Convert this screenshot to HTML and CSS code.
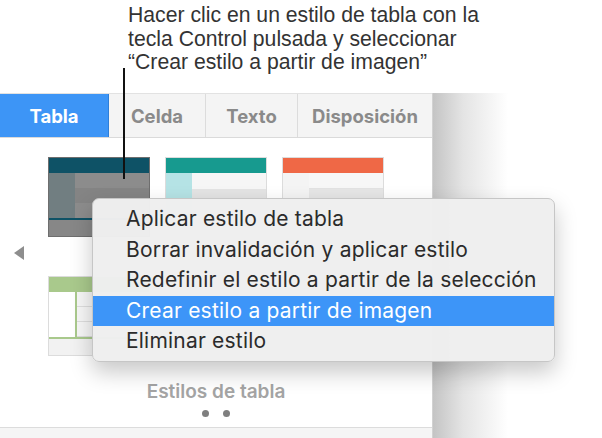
FILE: index.html
```html
<!DOCTYPE html>
<html lang="es">
<head>
    <meta charset="UTF-8">
    <title>Estilos de tabla</title>
    <link rel="stylesheet" href="styles.css">
</head>
<body>

    <div class="callout">
        <p>Hacer clic en un estilo de tabla con la<br>tecla Control pulsada y seleccionar<br>“Crear estilo a partir de imagen”</p>
    </div>

    <div class="main">
        <div class="panel">
            <div class="tabs">
                <div class="tab active">Tabla</div>
                <div class="tab">Celda</div>
                <div class="tab">Texto</div>
                <div class="tab last">Disposición</div>
            </div>

            <div class="styles">
                <div class="pager">
                    <div class="arrow"></div>
                    <div class="grid">
                        <div class="thumb dark">
                            <div class="head"></div>
                            <div class="body">
                                <div class="col"></div>
                                <div class="rows">
                                    <div class="r"></div><div class="r alt"></div><div class="r"></div>
                                </div>
                            </div>
                            <div class="foot"></div>
                        </div>
                        <div class="thumb teal">
                            <div class="head"></div>
                            <div class="body">
                                <div class="col"></div>
                                <div class="rows">
                                    <div class="r"></div><div class="r alt"></div><div class="r"></div>
                                </div>
                            </div>
                            <div class="foot"></div>
                        </div>
                        <div class="thumb orange">
                            <div class="head"></div>
                            <div class="body">
                                <div class="col"></div>
                                <div class="rows">
                                    <div class="r"></div><div class="r alt"></div><div class="r"></div>
                                </div>
                            </div>
                            <div class="foot"></div>
                        </div>
                        <div class="thumb green">
                            <div class="head"></div>
                            <div class="body">
                                <div class="col"></div>
                                <div class="rows">
                                    <div class="r"></div><div class="r"></div><div class="r"></div>
                                </div>
                            </div>
                            <div class="foot"></div>
                        </div>
                        <div class="thumb blank"></div>
                        <div class="thumb blank"></div>
                    </div>
                </div>

                <div class="label">Estilos de tabla</div>
                <div class="dots"><span></span><span></span></div>
            </div>

            <div class="bottom"></div>
        </div>
        <div class="shade"></div>
    </div>

    <!-- línea de la leyenda -->
    <div class="leader"></div>

    <!-- menú contextual -->
    <ul class="menu">
        <li>Aplicar estilo de tabla</li>
        <li>Borrar invalidación y aplicar estilo</li>
        <li>Redefinir el estilo a partir de la selección</li>
        <li class="selected">Crear estilo a partir de imagen</li>
        <li>Eliminar estilo</li>
    </ul>

</body>
</html>
```

FILE: styles.css
```css
body {
    margin: 0;
    width: 602px;
    height: 438px;
    overflow: hidden;
    background: #fff;
    font-family: 'Inter', 'Liberation Sans', sans-serif;
    position: relative;
}

/* texto de la leyenda */
.callout {
    height: 93px;
    padding-left: 128px;
    box-sizing: border-box;
}

.callout p {
    margin: 0;
    padding-top: 3px;
    font-family: 'Liberation Sans', sans-serif;
    font-size: 21.2px;
    line-height: 23.5px;
    color: #333;
}

.main {
    display: flex;
    height: 345px;
}

.panel {
    width: 432px;
    display: flex;
    flex-direction: column;
    border-right: 1px solid #d2d2d2;
}

.shade {
    flex: 1;
    background: linear-gradient(90deg, #c4c4c4, #e4e4e4 30px, #fff 75px);
}

/* pestañas */
.tabs {
    display: flex;
    height: 45px;
    background: #f4f4f4;
    border-top: 1px solid #e2e2e2;
    border-bottom: 1px solid #dadada;
    box-sizing: border-box;
}

.tab {
    display: flex;
    align-items: center;
    justify-content: center;
    font-size: 18.5px;
    font-weight: 700;
    color: #8a8a8a;
    border-right: 1px solid #dcdcdc;
}

.tab:nth-child(1) { width: 108px; }
.tab:nth-child(2) { width: 96px; }
.tab:nth-child(3) { width: 91px; }
.tab.last { flex: 1; border-right: none; }

.tab.active {
    background: #3d95f6;
    color: #fff;
    border-right: 1px solid #2f7fd8;
}

/* estilos de tabla */
.styles {
    flex: 1;
    padding-top: 19px;
}

.pager {
    display: flex;
    align-items: center;
}

.arrow {
    width: 0;
    height: 0;
    margin: 0 24px 8px 14px;
    border-top: 7px solid transparent;
    border-bottom: 7px solid transparent;
    border-right: 10px solid #8e8e8e;
}

.grid {
    display: grid;
    grid-template-columns: repeat(3, 102px);
    grid-auto-rows: 80px;
    column-gap: 15px;
    row-gap: 39px;
}

.thumb {
    display: flex;
    flex-direction: column;
    border: 1px solid #dcdcdc;
    background: #fff;
}

.thumb .head { height: 15px; }
.thumb .body { flex: 1; display: flex; }
.thumb .col { width: 26px; }
.thumb .rows { flex: 1; display: flex; flex-direction: column; }
.thumb .r { flex: 1; }
.thumb .foot { height: 16px; }

.dark { border-color: #6e6e6e; background: #888; }
.dark .head { background: #0e5266; }
.dark .col { background: #717e81; }
.dark .r { background: #8c8c8c; }
.dark .r.alt { background: #848484; }
.dark .foot { background: #878787; border-top: 2px solid #0e5266; }

.teal .head { background: #179a8f; }
.teal .col { background: #b5e3e5; }
.teal .r { background: #f6f6f6; }
.teal .r.alt { background: #e4e4e4; }
.teal .foot { background: #f4f4f4; }

.orange .head { background: #ef6846; }
.orange .col { background: #f4f4f4; }
.orange .r { background: #f7f7f7; border-bottom: 1px solid #e2e2e2; }
.orange .r.alt { background: #e6e6e6; }
.orange .foot { background: #f4f4f4; }

.green .head { background: #a9c98c; }
.green .col { border-right: 2px solid #a9c98c; }
.green .r { border-bottom: 1px solid #dedede; background: #f7f7f7; }
.green .foot { background: #f2f2f2; border-top: 2px solid #a9c98c; }

.blank { border: none; background: none; }

.label {
    margin-top: 24px;
    text-align: center;
    font-size: 19px;
    font-weight: 600;
    color: #a4a4a4;
}

.dots {
    display: flex;
    justify-content: center;
    gap: 14px;
    margin-top: 7px;
}

.dots span {
    width: 7px;
    height: 7px;
    border-radius: 50%;
    background: #7f7f7f;
}

.bottom {
    height: 10px;
    background: #f5f5f5;
    border-top: 1px solid #dcdcdc;
}

/* línea vertical que apunta a la miniatura */
.leader {
    position: absolute;
    left: 123px;
    top: 68px;
    width: 2px;
    height: 111px;
    background: #111;
}

/* menú contextual */
.menu {
    position: absolute;
    left: 92px;
    top: 198px;
    width: 463px;
    margin: 0;
    padding: 5px 0 6px;
    list-style: none;
    background: rgba(239, 239, 239, 0.98);
    border: 1px solid #c6c6c6;
    border-radius: 7px;
    box-shadow: 0 10px 22px rgba(0, 0, 0, 0.22);
    box-sizing: border-box;
    height: 164px;
}

.menu li {
    height: 30.5px;
    line-height: 30.5px;
    padding-left: 33px;
    font-size: 21px;
    letter-spacing: 0.2px;
    color: #2b2b2b;
}

.menu li.selected {
    background: #3d95f8;
    color: #fff;
}
```
